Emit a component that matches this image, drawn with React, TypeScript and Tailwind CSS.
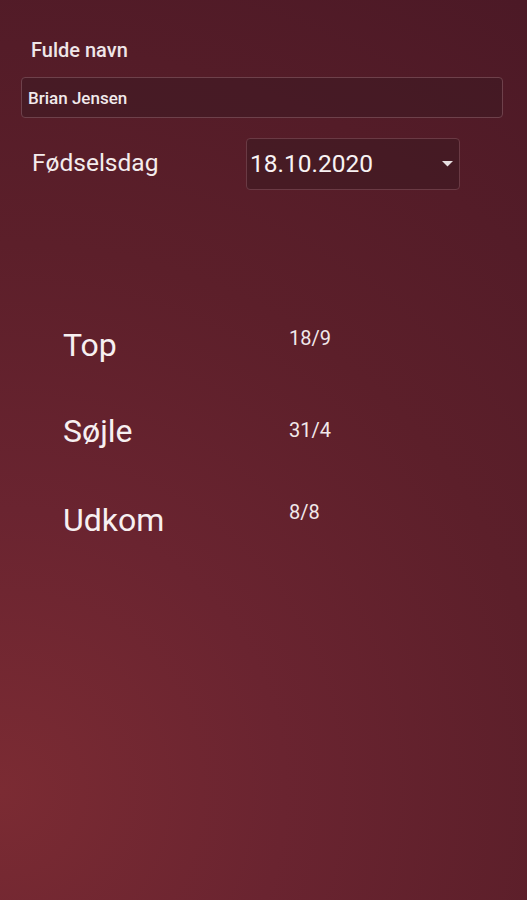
export default function App() {
  const rows = [
    { label: 'Top', value: '18/9', gap: '', labelPad: 'pt-0', valuePad: 'pt-0' },
    { label: 'Søjle', value: '31/4', gap: 'mt-[48px]', labelPad: 'pt-0', valuePad: 'pt-[6px]' },
    { label: 'Udkom', value: '8/8', gap: 'mt-[50px]', labelPad: 'pt-[1px]', valuePad: 'pt-0' },
  ];

  return (
    <div
      className="w-[527px] h-[900px] overflow-hidden text-white bg-[radial-gradient(ellipse_180%_105%_at_0%_88%,#7b2b33_0%,#6a2430_30%,#5c1f2a_58%,#4c1926_100%)]"
      style={{ fontFamily: 'Roboto, "Noto Sans", sans-serif' }}
    >
      <div className="pt-[38px] pl-[31px] text-[20px] leading-[24px] font-medium text-[#efe6e8]">Fulde navn</div>

      <div className="ml-[21px] mt-[15px] w-[482px] h-[41px] rounded-[4px] border border-[#6e414b] bg-[#3c1a22]/55 flex items-center pl-[6px] text-[17px] leading-[20px] font-medium text-[#f1eaec]">
        Brian Jensen
      </div>

      <div className="flex items-start mt-[20px]">
        <div className="pl-[32px] w-[246px] pt-[10px] text-[24.5px] leading-[30px] text-[#f4eced]">Fødselsdag</div>
        <div className="w-[214px] h-[52px] rounded-[4px] border border-[#6a3a44] bg-[#3b1920]/55 flex items-center pl-[3px] pr-[6px]">
          <span className="text-[24.5px] leading-[30px] text-[#f8f2f3]">18.10.2020</span>
          <svg className="ml-auto" width="11" height="6" viewBox="0 0 11 6">
            <path d="M0 0 L5.5 5.5 L11 0 Z" fill="#e8dfe1" />
          </svg>
        </div>
      </div>

      <div className="mt-[136px] flex flex-col">
        {rows.map((r) => (
          <div key={r.label} className={`flex items-start ${r.gap}`}>
            <div className={`pl-[63px] w-[289px] text-[32px] leading-[38px] text-[#f7f0f1] ${r.labelPad}`}>{r.label}</div>
            <div className={`text-[20px] leading-[24px] text-[#f1e8ea] ${r.valuePad}`}>{r.value}</div>
          </div>
        ))}
      </div>
    </div>
  );
}
